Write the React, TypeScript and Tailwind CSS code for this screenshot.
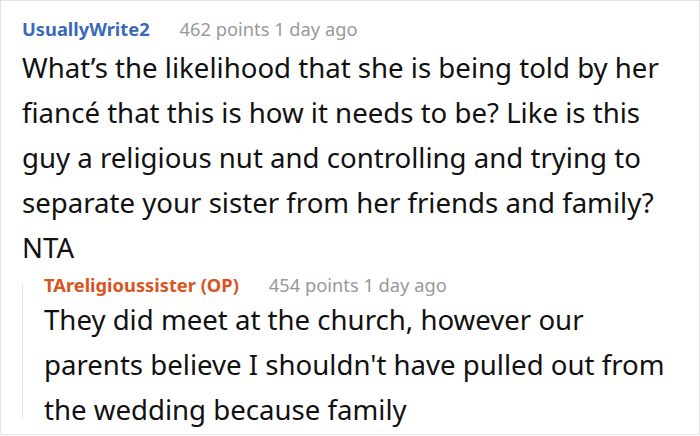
import React from 'react';

const font = { fontFamily: '"Noto Sans", "Open Sans", sans-serif' };

export default function App() {
  return (
    <div className="w-[700px] h-[435px] bg-white border border-[#e4e4e4] overflow-hidden" style={font}>
      <div className="pl-[21px] pr-[16px] pt-[16px]">
        {/* Top comment */}
        <div className="flex items-baseline gap-[30px] leading-[24px]">
          <span className="text-[18.3px] font-bold text-[#3a69b9]">UsuallyWrite2</span>
          <span className="text-[18.3px] text-[#999999]">462 points 1 day ago</span>
        </div>
        <p className="mt-[4px] text-[27.6px] leading-[45px] text-[#111111]">
          What’s the likelihood that she is being told by her fiancé that this is how it needs to be? Like is this guy a
          religious nut and controlling and trying to separate your sister from her friends and family? NTA
        </p>

        {/* Reply */}
        <div className="mt-[3px] flex">
          <div className="w-px shrink-0 bg-[#e2e2e2] mt-[11px] mb-[14px]"></div>
          <div className="pl-[21px]">
            <div className="flex items-baseline gap-[30px] leading-[24px]">
              <span className="text-[18.3px] font-bold text-[#d9541e]">TAreligioussister (OP)</span>
              <span className="text-[18.3px] text-[#999999]">454 points 1 day ago</span>
            </div>
            <p className="text-[27.6px] leading-[45px] text-[#111111]">
              They did meet at the church, however our parents believe I shouldn't have pulled out from the wedding
              because family
            </p>
          </div>
        </div>
      </div>
    </div>
  );
}
